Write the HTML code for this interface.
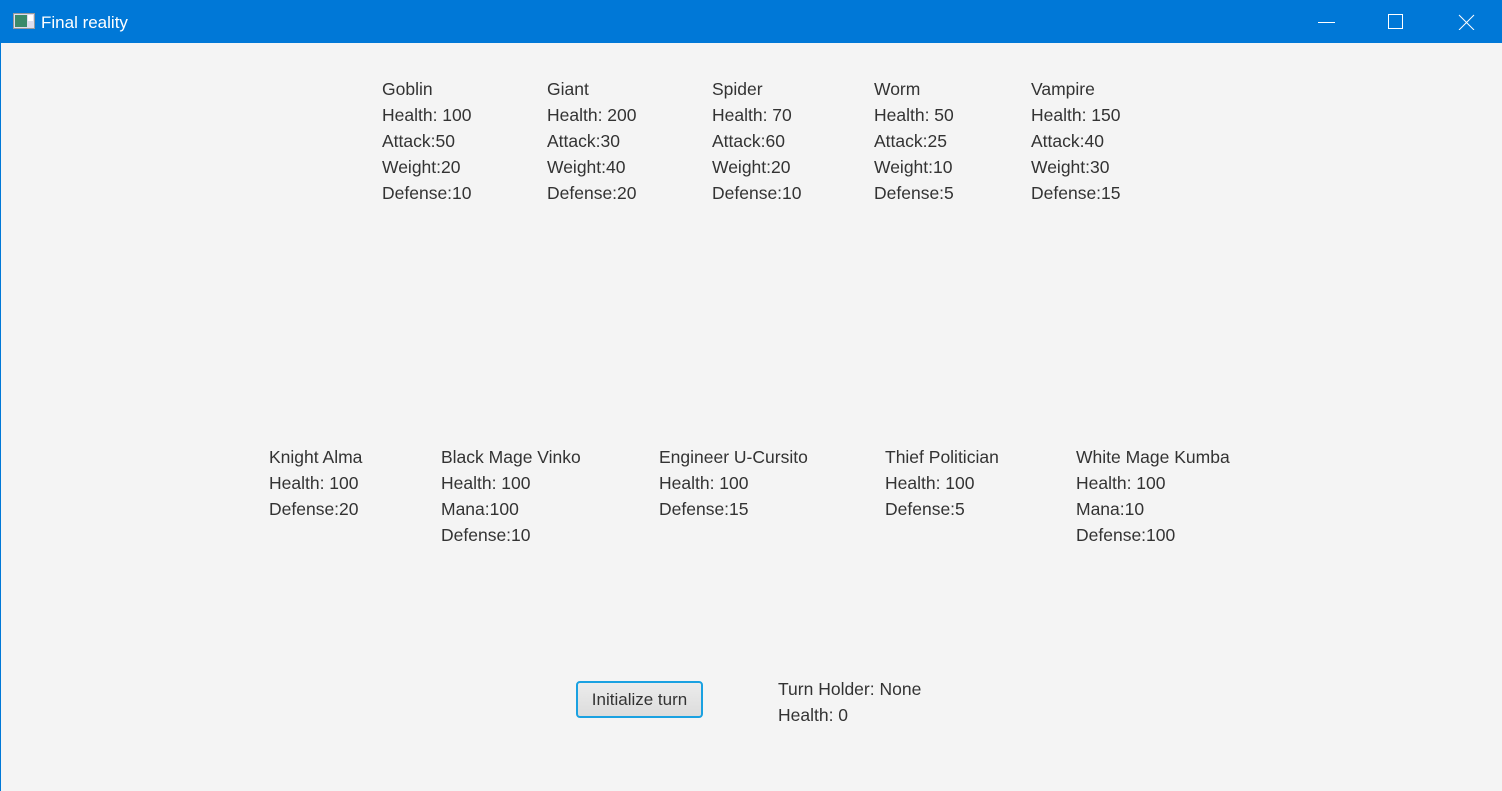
<!DOCTYPE html>
<html><head><style>
body{margin:0;width:1502px;height:791px;background:#f4f4f4;position:relative;overflow:hidden;font-family:"Liberation Sans",sans-serif;}
.tb{position:absolute;left:0;top:0;width:1502px;height:43px;background:#0078d7;color:#fff;}
.tb .t{position:absolute;left:41px;top:13px;font-size:17px;}
.lb{position:absolute;left:0;top:43px;width:1px;height:748px;background:#0078d7;}
.c{position:absolute;font-size:17.5px;line-height:26px;color:#333;white-space:nowrap;}
.btn{position:absolute;left:576px;top:681px;width:123px;height:33px;border:2px solid #1aa1e1;border-radius:4px;background:linear-gradient(#ececec,#dcdcdc);font-size:17px;color:#333;text-align:center;line-height:33px;box-sizing:content-box;}
</style></head><body>
<div class="tb">
<svg style="position:absolute;left:13px;top:13px" width="22" height="16"><rect x="0.5" y="0.5" width="21" height="15" fill="#dde" stroke="#999"/><rect x="2" y="2" width="12" height="12" fill="#3a8a6a"/><rect x="15" y="2" width="5" height="6" fill="#fff"/></svg>
<div class="t">Final reality</div>
<svg style="position:absolute;left:1318px;top:14px" width="160" height="16" stroke="#fff" fill="none" stroke-width="1"><line x1="0" y1="8.5" x2="17" y2="8.5"/><rect x="70.5" y="0.5" width="14" height="14"/><line x1="141" y1="1" x2="156" y2="16"/><line x1="156" y1="1" x2="141" y2="16"/></svg>
</div>
<div class="lb"></div>
<div class="c" style="left:382px;top:76px">Goblin<br>Health: 100<br>Attack:50<br>Weight:20<br>Defense:10</div>
<div class="c" style="left:547px;top:76px">Giant<br>Health: 200<br>Attack:30<br>Weight:40<br>Defense:20</div>
<div class="c" style="left:712px;top:76px">Spider<br>Health: 70<br>Attack:60<br>Weight:20<br>Defense:10</div>
<div class="c" style="left:874px;top:76px">Worm<br>Health: 50<br>Attack:25<br>Weight:10<br>Defense:5</div>
<div class="c" style="left:1031px;top:76px">Vampire<br>Health: 150<br>Attack:40<br>Weight:30<br>Defense:15</div>
<div class="c" style="left:269px;top:444px">Knight Alma<br>Health: 100<br>Defense:20</div>
<div class="c" style="left:441px;top:444px">Black Mage Vinko<br>Health: 100<br>Mana:100<br>Defense:10</div>
<div class="c" style="left:659px;top:444px">Engineer U-Cursito<br>Health: 100<br>Defense:15</div>
<div class="c" style="left:885px;top:444px">Thief Politician<br>Health: 100<br>Defense:5</div>
<div class="c" style="left:1076px;top:444px">White Mage Kumba<br>Health: 100<br>Mana:10<br>Defense:100</div>
<div class="btn">Initialize turn</div>
<div class="c" style="left:778px;top:676px">Turn Holder: None<br>Health: 0</div>
</body></html>
